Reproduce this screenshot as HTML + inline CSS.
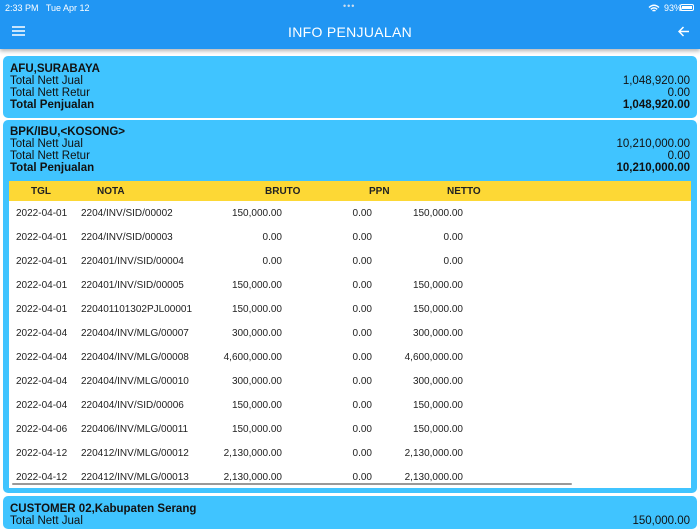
<!DOCTYPE html>
<html><head><meta charset="utf-8">
<style>
*{margin:0;padding:0;box-sizing:border-box}
body{width:700px;height:525px;overflow:hidden;background:#fff;font-family:"Liberation Sans",sans-serif;position:relative;color:#111}
.abs{position:absolute}
#bar{left:0;top:0;width:700px;height:49px;background:#2196F3;box-shadow:0 2px 4px rgba(0,0,0,.3)}
.st{color:#fff;font-size:9px;top:3px}
.card{position:absolute;left:3px;width:694px;background:#40C4FF;border-radius:5px}
.ln{position:absolute;left:7px;right:7px;font-size:11.5px;height:13px;line-height:13px}
.ln span{position:absolute;right:0}
.b{font-weight:bold}
.row{position:absolute;left:9px;width:682px;height:24px;font-size:10px;color:#222}
.row div{position:absolute;top:7px}
</style></head><body>
<div id="bar" class="abs"></div>
<div class="abs st" style="left:5px">2:33 PM &nbsp; Tue Apr 12</div>
<div class="abs st" style="left:343px;top:1px;letter-spacing:1px;color:#cde">•••</div>
<div class="abs st" style="left:664px">93%</div>
<svg class="abs" style="left:648px;top:4px" width="12" height="9" viewBox="0 0 12 9"><path d="M1 3.5Q6 -1 11 3.5M2.8 5.3Q6 2.5 9.2 5.3M4.5 7Q6 5.8 7.5 7" stroke="#fff" stroke-width="1.4" fill="none"/></svg>
<div class="abs" style="left:680px;top:4px;width:14px;height:7px;border:1px solid #fff;border-radius:2px;padding:1px"><div style="background:#fff;width:100%;height:100%"></div></div>
<svg class="abs" style="left:12px;top:26px" width="13" height="10"><path d="M0 1H13M0 5H13M0 9H13" stroke="#fff" stroke-width="1.6"/></svg>
<div class="abs" style="left:0;width:700px;top:24px;text-align:center;color:#fff;font-size:14px;letter-spacing:.3px">INFO PENJUALAN</div>
<svg class="abs" style="left:678px;top:26px" width="12" height="11"><path d="M11 5.5H1M5.5 1L1 5.5L5.5 10" stroke="#fff" stroke-width="1.5" fill="none"/></svg>

<div class="card" style="top:56px;height:62px">
<div class="ln b" style="top:7px">AFU,SURABAYA</div>
<div class="ln" style="top:19px">Total Nett Jual<span>1,048,920.00</span></div>
<div class="ln" style="top:31px">Total Nett Retur<span>0.00</span></div>
<div class="ln b" style="top:43px">Total Penjualan<span>1,048,920.00</span></div>
</div>

<div class="card" style="top:120px;height:373px">
<div class="ln b" style="top:6px">BPK/IBU,&lt;KOSONG&gt;</div>
<div class="ln" style="top:18px">Total Nett Jual<span>10,210,000.00</span></div>
<div class="ln" style="top:30px">Total Nett Retur<span>0.00</span></div>
<div class="ln b" style="top:42px">Total Penjualan<span>10,210,000.00</span></div>
</div>
<div class="abs" style="left:9px;top:181px;width:682px;height:307px;background:#fff"></div>
<div class="abs" style="left:9px;top:181px;width:682px;height:20px;background:#FDD835;font-size:10px;font-weight:bold;color:#222">
<div class="abs" style="left:22px;top:5px">TGL</div>
<div class="abs" style="left:88px;top:5px">NOTA</div>
<div class="abs" style="left:256px;top:5px">BRUTO</div>
<div class="abs" style="left:360px;top:5px">PPN</div>
<div class="abs" style="left:438px;top:5px">NETTO</div>
</div>
<div class="abs" style="left:12px;top:483px;width:560px;height:2px;background:#999;border-radius:1px"></div>

<div class="card" style="top:496px;height:33px">
<div class="ln b" style="top:7px">CUSTOMER 02,Kabupaten Serang</div>
<div class="ln" style="top:19px">Total Nett Jual<span>150,000.00</span></div>
</div>

<div class="row" style="top:201px"><div style="left:7px">2022-04-01</div><div style="left:72px">2204/INV/SID/00002</div><div style="right:409px">150,000.00</div><div style="right:319px">0.00</div><div style="right:228px">150,000.00</div></div>
<div class="row" style="top:225px"><div style="left:7px">2022-04-01</div><div style="left:72px">2204/INV/SID/00003</div><div style="right:409px">0.00</div><div style="right:319px">0.00</div><div style="right:228px">0.00</div></div>
<div class="row" style="top:249px"><div style="left:7px">2022-04-01</div><div style="left:72px">220401/INV/SID/00004</div><div style="right:409px">0.00</div><div style="right:319px">0.00</div><div style="right:228px">0.00</div></div>
<div class="row" style="top:273px"><div style="left:7px">2022-04-01</div><div style="left:72px">220401/INV/SID/00005</div><div style="right:409px">150,000.00</div><div style="right:319px">0.00</div><div style="right:228px">150,000.00</div></div>
<div class="row" style="top:297px"><div style="left:7px">2022-04-01</div><div style="left:72px">220401101302PJL00001</div><div style="right:409px">150,000.00</div><div style="right:319px">0.00</div><div style="right:228px">150,000.00</div></div>
<div class="row" style="top:321px"><div style="left:7px">2022-04-04</div><div style="left:72px">220404/INV/MLG/00007</div><div style="right:409px">300,000.00</div><div style="right:319px">0.00</div><div style="right:228px">300,000.00</div></div>
<div class="row" style="top:345px"><div style="left:7px">2022-04-04</div><div style="left:72px">220404/INV/MLG/00008</div><div style="right:409px">4,600,000.00</div><div style="right:319px">0.00</div><div style="right:228px">4,600,000.00</div></div>
<div class="row" style="top:369px"><div style="left:7px">2022-04-04</div><div style="left:72px">220404/INV/MLG/00010</div><div style="right:409px">300,000.00</div><div style="right:319px">0.00</div><div style="right:228px">300,000.00</div></div>
<div class="row" style="top:393px"><div style="left:7px">2022-04-04</div><div style="left:72px">220404/INV/SID/00006</div><div style="right:409px">150,000.00</div><div style="right:319px">0.00</div><div style="right:228px">150,000.00</div></div>
<div class="row" style="top:417px"><div style="left:7px">2022-04-06</div><div style="left:72px">220406/INV/MLG/00011</div><div style="right:409px">150,000.00</div><div style="right:319px">0.00</div><div style="right:228px">150,000.00</div></div>
<div class="row" style="top:441px"><div style="left:7px">2022-04-12</div><div style="left:72px">220412/INV/MLG/00012</div><div style="right:409px">2,130,000.00</div><div style="right:319px">0.00</div><div style="right:228px">2,130,000.00</div></div>
<div class="row" style="top:465px"><div style="left:7px">2022-04-12</div><div style="left:72px">220412/INV/MLG/00013</div><div style="right:409px">2,130,000.00</div><div style="right:319px">0.00</div><div style="right:228px">2,130,000.00</div></div>
</body></html>
